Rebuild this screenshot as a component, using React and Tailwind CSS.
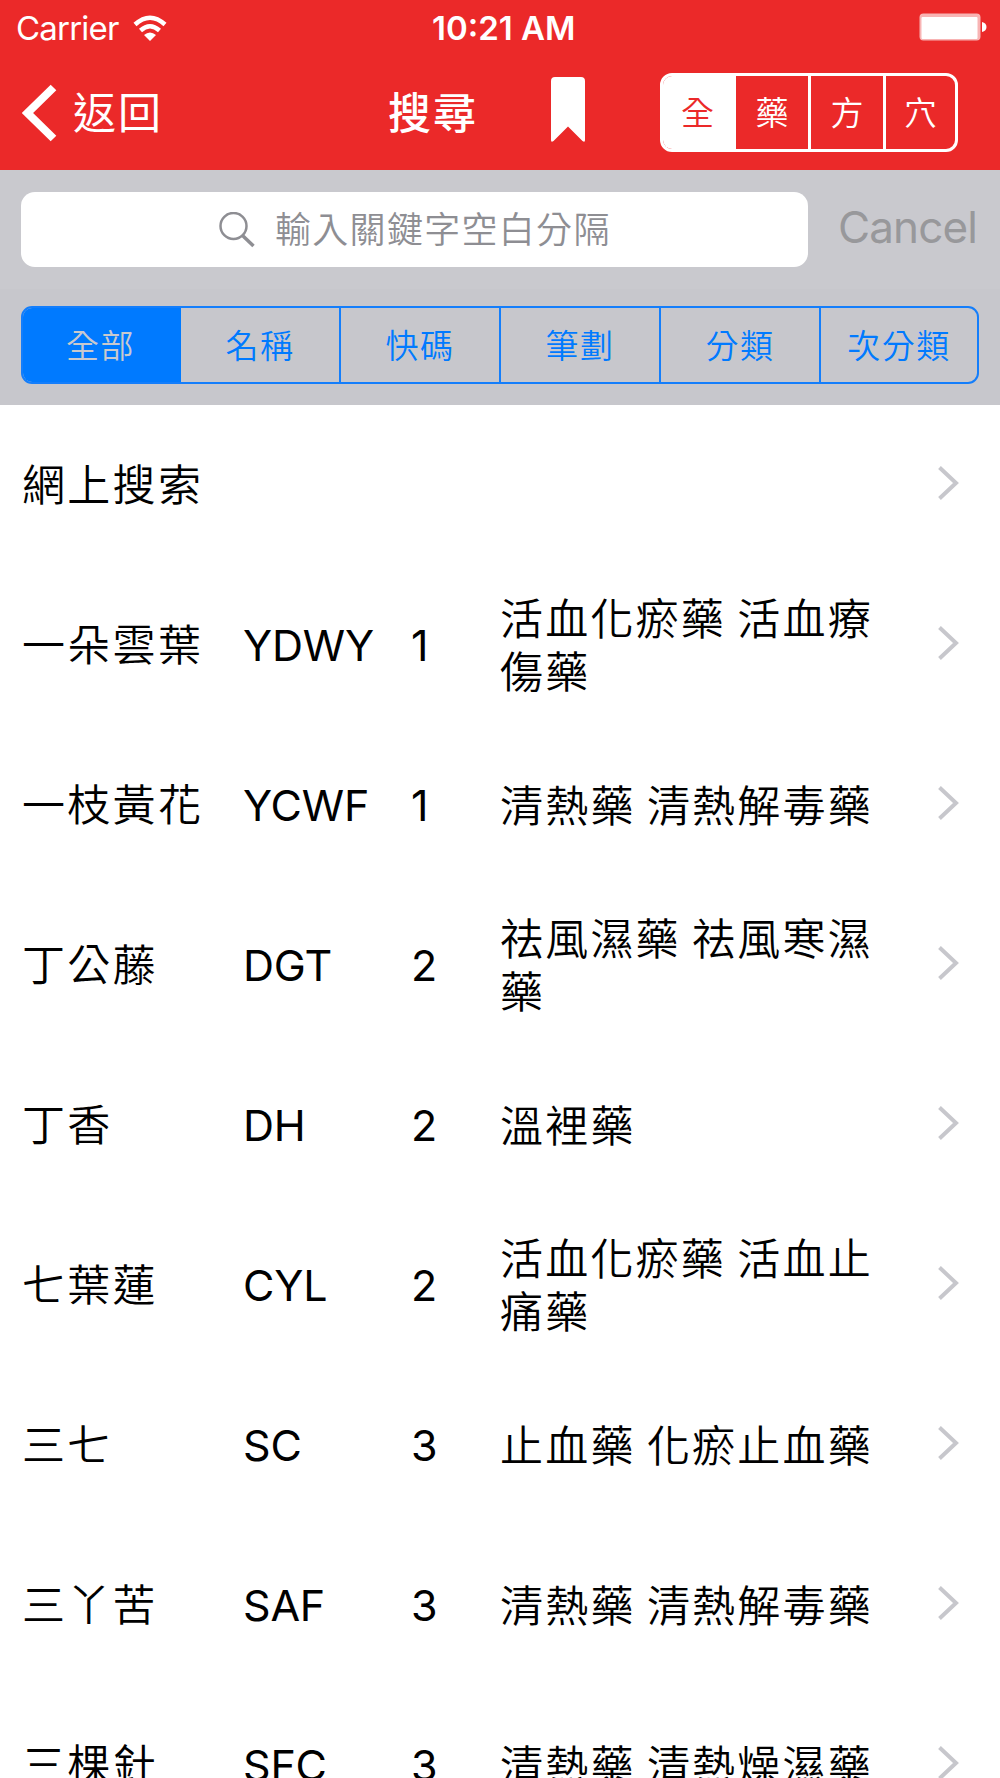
import { useState } from "react";

const SCOPES = ["全", "藥", "方", "穴"];

const FILTERS = ["全部", "名稱", "快碼", "筆劃", "分類", "次分類"];

const HERBS = [
  { name: "一朵雲葉", code: "YDWY", strokes: 1, category: "活血化瘀藥 活血療傷藥" },
  { name: "一枝黃花", code: "YCWF", strokes: 1, category: "清熱藥 清熱解毒藥" },
  { name: "丁公藤", code: "DGT", strokes: 2, category: "祛風濕藥 祛風寒濕藥" },
  { name: "丁香", code: "DH", strokes: 2, category: "溫裡藥" },
  { name: "七葉蓮", code: "CYL", strokes: 2, category: "活血化瘀藥 活血止痛藥" },
  { name: "三七", code: "SC", strokes: 3, category: "止血藥 化瘀止血藥" },
  { name: "三丫苦", code: "SAF", strokes: 3, category: "清熱藥 清熱解毒藥" },
  { name: "三棵針", code: "SFC", strokes: 3, category: "清熱藥 清熱燥濕藥" },
];

const App = () => {
  const [scope, setScope] = useState("全");
  const [filter, setFilter] = useState("全部");

  return (
    <div className="w-[1000px] h-[1778px] overflow-hidden bg-white text-black font-['Inter','Noto_Sans_CJK_TC',sans-serif]">
      <header className="h-[170px] bg-[#eb2929] text-white">
        <StatusBar />
        <div className="h-[115px] flex items-center pl-[22px]">
          <button type="button" className="w-[366px] flex items-center">
            <svg width="36" height="58" viewBox="0 0 36 58" fill="none">
              <path d="M31.5 3.5L5.500 29L31.5 54.500" stroke="currentColor" strokeWidth="8" />
            </svg>
            <span className="ml-[15px] text-[43px] leading-[50px] tracking-[2px]">返回</span>
          </button>
          <h1 className="w-[163px] text-[43px] leading-[50px] tracking-[2px] font-medium">
            搜尋
          </h1>
          <svg className="-mt-[6px]" width="34" height="66" viewBox="0 0 34 66">
            <path
              d="M4 0H30Q34 0 34 4V63Q34 66 31.5 64L17 49.5L2.500 64Q0 66 0 63V4Q0 0 4 0Z"
              fill="currentColor"
            />
          </svg>
          <div className="ml-[75px] w-[298px] h-[79px] flex rounded-[12px] border-[3px] border-white overflow-hidden">
            {SCOPES.map((item, i) => (
              <button
                key={item}
                type="button"
                onClick={() => setScope(item)}
                className={`pt-px text-[33px] leading-[50px] font-[350] border-white ${
                  i === 0 ? "w-[73px] pr-[4px]" : i < 3 ? "w-[75px] border-r-[3px]" : "flex-1"
                } ${scope === item ? "bg-white text-[#eb2929]" : ""}`}
              >
                {item}
              </button>
            ))}
          </div>
        </div>
      </header>

      <div className="h-[235px] bg-[#c9c9ce] px-[21px]">
        <div className="h-[119px] pt-[22px] flex">
          <div className="w-[787px] h-[75px] rounded-[14px] bg-white flex items-center text-[#8e8e93]">
            <svg className="ml-[198px]" width="36" height="36" viewBox="0 0 36 36" fill="none">
              <circle cx="14.500" cy="14" r="13" stroke="currentColor" strokeWidth="2.500" />
              <path d="M23.500 23.500L34.500 34" stroke="currentColor" strokeWidth="3.500" />
            </svg>
            <span className="ml-[20px] text-[36px] leading-[50px] tracking-[1.3px] font-[350]">
              輸入關鍵字空白分隔
            </span>
          </div>
          <button
            type="button"
            className="ml-[30px] h-[70px] text-[44px] tracking-[-0.9px] font-[385] text-[#98989b]"
          >
            Cancel
          </button>
        </div>
        <div className="-mx-[21px] px-[21px] h-[116px] pt-[17px] bg-[#c7c7cc]">
          <div className="h-[78px] flex rounded-[11px] border-2 border-[#147efb] overflow-hidden">
            {FILTERS.map((item, i) => (
              <button
                key={item}
                type="button"
                onClick={() => setFilter(item)}
                className={`pt-px text-[33px] leading-[50px] tracking-[1.500px] border-[#147efb] font-[350] ${
                  i === 0 ? "w-[158px] pr-[3px]" : i < 5 ? "w-[160px] border-r-2" : "flex-1"
                } ${filter === item ? "bg-[#007aff] text-[#c9c9ce]" : "text-[#007aff]"}`}
              >
                {item}
              </button>
            ))}
          </div>
        </div>
      </div>

      <main className="text-[43px] leading-[53px] tracking-[2.3px] font-[350]">
        <Row>
          <span className="pt-px">網上搜索</span>
        </Row>
        {HERBS.map((herb) => (
          <Row key={herb.name}>
            <span className="w-[221px] pt-px">{herb.name}</span>
            <span className="w-[168px] tracking-[-0.2px] font-[385]">{herb.code}</span>
            <span className="w-[89px] font-[385]">{herb.strokes}</span>
            <span className="w-[385px] pt-[2px] tracking-[2.2px] [word-spacing:-3px]">
              {herb.category}
            </span>
          </Row>
        ))}
      </main>
    </div>
  );
};

const StatusBar = () => (
  <div className="h-[55px] flex items-center text-[33px] leading-[40px]">
    <div className="w-[432px] pl-[16px] flex items-center">
      <span className="w-[104px] tracking-[-0.8px]">Carrier</span>
      <svg className="ml-[13px]" width="34" height="26" viewBox="0 0 34 26" fill="none">
        <path d="M2 9.500Q17 -4 32 9.500" stroke="currentColor" strokeWidth="4.500" />
        <path d="M7.500 15.500Q17 7 26.500 15.500" stroke="currentColor" strokeWidth="4.500" />
        <path d="M11 20Q17 15 23 20L17 26Z" fill="currentColor" />
      </svg>
    </div>
    <span className="w-[487px] font-semibold">10:21 AM</span>
    <svg className="-mt-px" width="68" height="28" viewBox="0 0 68 28">
      <rect x="0.500" y="0.500" width="61" height="27" rx="4" fill="#f8b4b4" />
      <rect x="2.500" y="4" width="56" height="22" rx="1" fill="#fff" />
      <path d="M63 9Q67.500 10 67.500 14Q67.500 18 63 19Z" fill="#fff" />
    </svg>
  </div>
);

const Row = ({ children }) => (
  <div className="h-[160px] pl-[22px] flex items-center">
    {children}
    <svg className="ml-auto mr-[40px] -mt-[4px]" width="23" height="34" viewBox="0 0 23 34" fill="none">
      <path d="M2.500 1.500L19 17L2.500 32.500" stroke="#c7c7cc" strokeWidth="4" />
    </svg>
  </div>
);

export default App;
